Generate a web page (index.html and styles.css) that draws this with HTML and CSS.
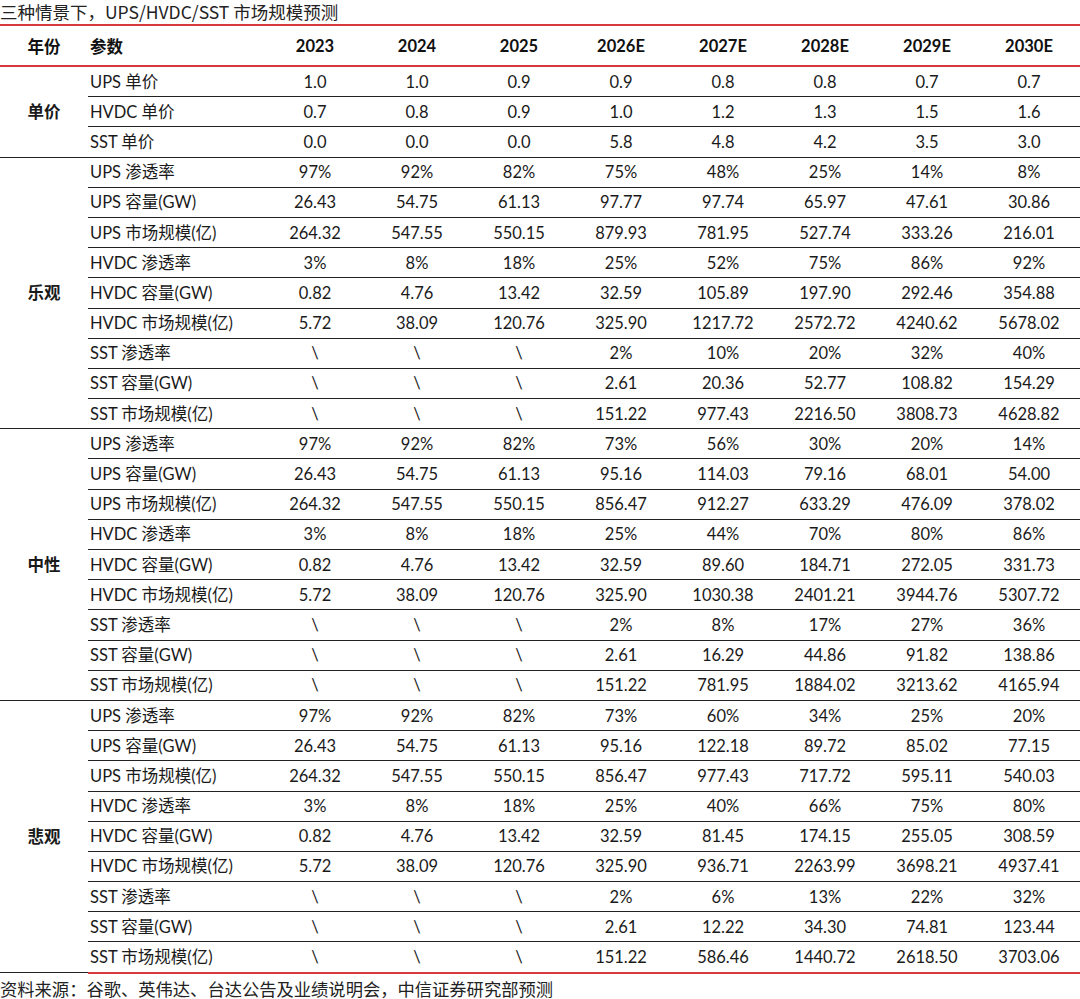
FILE: index.html
```html
<!DOCTYPE html>
<html lang="zh-CN">
<head>
<meta charset="utf-8">
<link rel="stylesheet" href="styles.css">
</head>
<body>
<div class="title">三种情景下，UPS/HVDC/SST 市场规模预测</div>
<table class="t">
<colgroup><col class="c-grp"><col class="c-par"><col span="8" class="c-yr"></colgroup>
<thead>
<tr><th class="grp">年份</th><th class="par">参数</th><th>2023</th><th>2024</th><th>2025</th><th>2026E</th><th>2027E</th><th>2028E</th><th>2029E</th><th>2030E</th></tr>
</thead>
<tbody>
<tr><td class="grp" rowspan="3">单价</td><td class="par">UPS 单价</td><td>1.0</td><td>1.0</td><td>0.9</td><td>0.9</td><td>0.8</td><td>0.8</td><td>0.7</td><td>0.7</td></tr>
<tr><td class="par">HVDC 单价</td><td>0.7</td><td>0.8</td><td>0.9</td><td>1.0</td><td>1.2</td><td>1.3</td><td>1.5</td><td>1.6</td></tr>
<tr class="last"><td class="par">SST 单价</td><td>0.0</td><td>0.0</td><td>0.0</td><td>5.8</td><td>4.8</td><td>4.2</td><td>3.5</td><td>3.0</td></tr>

<tr><td class="grp" rowspan="9">乐观</td><td class="par">UPS 渗透率</td><td>97%</td><td>92%</td><td>82%</td><td>75%</td><td>48%</td><td>25%</td><td>14%</td><td>8%</td></tr>
<tr><td class="par">UPS 容量(GW)</td><td>26.43</td><td>54.75</td><td>61.13</td><td>97.77</td><td>97.74</td><td>65.97</td><td>47.61</td><td>30.86</td></tr>
<tr><td class="par">UPS 市场规模(亿)</td><td>264.32</td><td>547.55</td><td>550.15</td><td>879.93</td><td>781.95</td><td>527.74</td><td>333.26</td><td>216.01</td></tr>
<tr><td class="par">HVDC 渗透率</td><td>3%</td><td>8%</td><td>18%</td><td>25%</td><td>52%</td><td>75%</td><td>86%</td><td>92%</td></tr>
<tr><td class="par">HVDC 容量(GW)</td><td>0.82</td><td>4.76</td><td>13.42</td><td>32.59</td><td>105.89</td><td>197.90</td><td>292.46</td><td>354.88</td></tr>
<tr><td class="par">HVDC 市场规模(亿)</td><td>5.72</td><td>38.09</td><td>120.76</td><td>325.90</td><td>1217.72</td><td>2572.72</td><td>4240.62</td><td>5678.02</td></tr>
<tr><td class="par">SST 渗透率</td><td>\</td><td>\</td><td>\</td><td>2%</td><td>10%</td><td>20%</td><td>32%</td><td>40%</td></tr>
<tr><td class="par">SST 容量(GW)</td><td>\</td><td>\</td><td>\</td><td>2.61</td><td>20.36</td><td>52.77</td><td>108.82</td><td>154.29</td></tr>
<tr class="last"><td class="par">SST 市场规模(亿)</td><td>\</td><td>\</td><td>\</td><td>151.22</td><td>977.43</td><td>2216.50</td><td>3808.73</td><td>4628.82</td></tr>

<tr><td class="grp" rowspan="9">中性</td><td class="par">UPS 渗透率</td><td>97%</td><td>92%</td><td>82%</td><td>73%</td><td>56%</td><td>30%</td><td>20%</td><td>14%</td></tr>
<tr><td class="par">UPS 容量(GW)</td><td>26.43</td><td>54.75</td><td>61.13</td><td>95.16</td><td>114.03</td><td>79.16</td><td>68.01</td><td>54.00</td></tr>
<tr><td class="par">UPS 市场规模(亿)</td><td>264.32</td><td>547.55</td><td>550.15</td><td>856.47</td><td>912.27</td><td>633.29</td><td>476.09</td><td>378.02</td></tr>
<tr><td class="par">HVDC 渗透率</td><td>3%</td><td>8%</td><td>18%</td><td>25%</td><td>44%</td><td>70%</td><td>80%</td><td>86%</td></tr>
<tr><td class="par">HVDC 容量(GW)</td><td>0.82</td><td>4.76</td><td>13.42</td><td>32.59</td><td>89.60</td><td>184.71</td><td>272.05</td><td>331.73</td></tr>
<tr><td class="par">HVDC 市场规模(亿)</td><td>5.72</td><td>38.09</td><td>120.76</td><td>325.90</td><td>1030.38</td><td>2401.21</td><td>3944.76</td><td>5307.72</td></tr>
<tr><td class="par">SST 渗透率</td><td>\</td><td>\</td><td>\</td><td>2%</td><td>8%</td><td>17%</td><td>27%</td><td>36%</td></tr>
<tr><td class="par">SST 容量(GW)</td><td>\</td><td>\</td><td>\</td><td>2.61</td><td>16.29</td><td>44.86</td><td>91.82</td><td>138.86</td></tr>
<tr class="last"><td class="par">SST 市场规模(亿)</td><td>\</td><td>\</td><td>\</td><td>151.22</td><td>781.95</td><td>1884.02</td><td>3213.62</td><td>4165.94</td></tr>

<tr><td class="grp" rowspan="9">悲观</td><td class="par">UPS 渗透率</td><td>97%</td><td>92%</td><td>82%</td><td>73%</td><td>60%</td><td>34%</td><td>25%</td><td>20%</td></tr>
<tr><td class="par">UPS 容量(GW)</td><td>26.43</td><td>54.75</td><td>61.13</td><td>95.16</td><td>122.18</td><td>89.72</td><td>85.02</td><td>77.15</td></tr>
<tr><td class="par">UPS 市场规模(亿)</td><td>264.32</td><td>547.55</td><td>550.15</td><td>856.47</td><td>977.43</td><td>717.72</td><td>595.11</td><td>540.03</td></tr>
<tr><td class="par">HVDC 渗透率</td><td>3%</td><td>8%</td><td>18%</td><td>25%</td><td>40%</td><td>66%</td><td>75%</td><td>80%</td></tr>
<tr><td class="par">HVDC 容量(GW)</td><td>0.82</td><td>4.76</td><td>13.42</td><td>32.59</td><td>81.45</td><td>174.15</td><td>255.05</td><td>308.59</td></tr>
<tr><td class="par">HVDC 市场规模(亿)</td><td>5.72</td><td>38.09</td><td>120.76</td><td>325.90</td><td>936.71</td><td>2263.99</td><td>3698.21</td><td>4937.41</td></tr>
<tr><td class="par">SST 渗透率</td><td>\</td><td>\</td><td>\</td><td>2%</td><td>6%</td><td>13%</td><td>22%</td><td>32%</td></tr>
<tr><td class="par">SST 容量(GW)</td><td>\</td><td>\</td><td>\</td><td>2.61</td><td>12.22</td><td>34.30</td><td>74.81</td><td>123.44</td></tr>
<tr class="last final"><td class="par">SST 市场规模(亿)</td><td>\</td><td>\</td><td>\</td><td>151.22</td><td>586.46</td><td>1440.72</td><td>2618.50</td><td>3703.06</td></tr>
</tbody>
</table>
<div class="foot">资料来源：谷歌、英伟达、台达公告及业绩说明会，中信证券研究部预测</div>
</body>
</html>
```
FILE: styles.css
```css
html, body {
  margin: 0;
  padding: 0;
  background: #fff;
}
body {
  width: 1080px;
  font-family: Lato, "Noto Sans CJK SC", sans-serif;
  color: #1a1a1a;
  font-size: 16.5px;
}
.title {
  height: 24px;
  line-height: 24px;
  font-size: 17.5px;
  font-family: "Noto Sans CJK SC", sans-serif;
  color: #222;
  white-space: nowrap;
}
.t {
  width: 1080px;
  border-collapse: collapse;
  table-layout: fixed;
  border-top: 2px solid #d8393c;
}
.c-grp { width: 88px; }
.c-par { width: 176px; }
.c-yr { width: 102px; }
.t th {
  height: 39px;
  padding: 0;
  font-weight: 700;
  font-size: 16.5px;
  text-align: center;
  border-bottom: 2px solid #d8393c;
  color: #111;
}
.t th.par {
  text-align: left;
  padding-left: 2px;
}
.t td {
  height: 29.2px;
  padding: 0;
  text-align: center;
  vertical-align: middle;
  border-bottom: 1px solid #222;
  line-height: 20px;
}
.t td.par {
  text-align: left;
  padding-left: 2px;
  white-space: nowrap;
}
.t td.grp {
  font-weight: 700;
  border-bottom: 1px solid #222;
}
.t tr.last td {
  border-bottom: 1px solid #222;
}
.t tr.final td {
  border-bottom: 2px solid #d8393c;
}
.foot {
  font-family: "Noto Sans CJK SC", sans-serif;
  font-size: 17.3px;
  line-height: 24px;
  color: #222;
  white-space: nowrap;
  padding-top: 3px;
}
```
